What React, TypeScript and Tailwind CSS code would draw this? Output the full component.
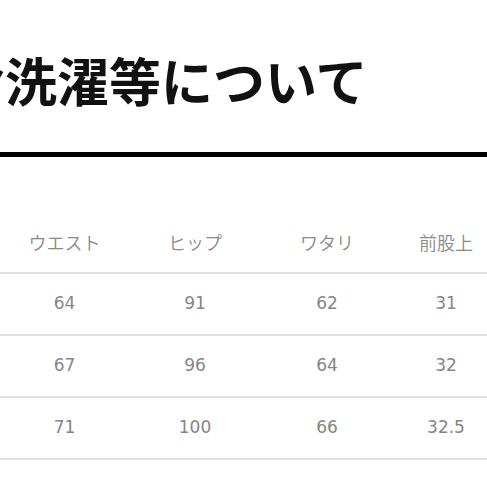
import React from "react";

const headers = ["ウエスト", "ヒップ", "ワタリ", "前股上"];
const rows = [
  ["64", "91", "62", "31"],
  ["67", "96", "64", "32"],
  ["71", "100", "66", "32.5"],
];

export default function App() {
  return (
    <div className="w-[487px] h-[487px] overflow-hidden bg-white">
      <div className="pt-[50px] h-[152px] overflow-visible">
        <div
          className="ml-[-47px] whitespace-nowrap text-[52px] leading-[60px] font-bold text-[#111]"
          style={{ fontFamily: '"Noto Sans CJK JP", "Noto Sans", sans-serif' }}
        >
          お洗濯等について
        </div>
      </div>
      <div className="h-[5px] bg-black" />
      <div className="mt-[55px]">
        <div
          className="grid grid-cols-[129px_132px_132px_106px] h-[62px] items-center border-b-2 border-[#e0e0e0] text-[18px] text-[#8a8a8a]"
          style={{ fontFamily: '"Noto Sans CJK JP", sans-serif', fontWeight: 350 }}
        >
          {headers.map((h) => (
            <div key={h} className="text-center">
              {h}
            </div>
          ))}
        </div>
        {rows.map((r, i) => (
          <div
            key={i}
            className="grid grid-cols-[129px_132px_132px_106px] h-[62px] items-center border-b-2 border-[#e0e0e0] text-[17px] text-[#858585]"
            style={{ fontFamily: '"DejaVu Sans", Verdana, sans-serif' }}
          >
            {r.map((c, j) => (
              <div key={j} className="text-center">
                {c}
              </div>
            ))}
          </div>
        ))}
      </div>
    </div>
  );
}
